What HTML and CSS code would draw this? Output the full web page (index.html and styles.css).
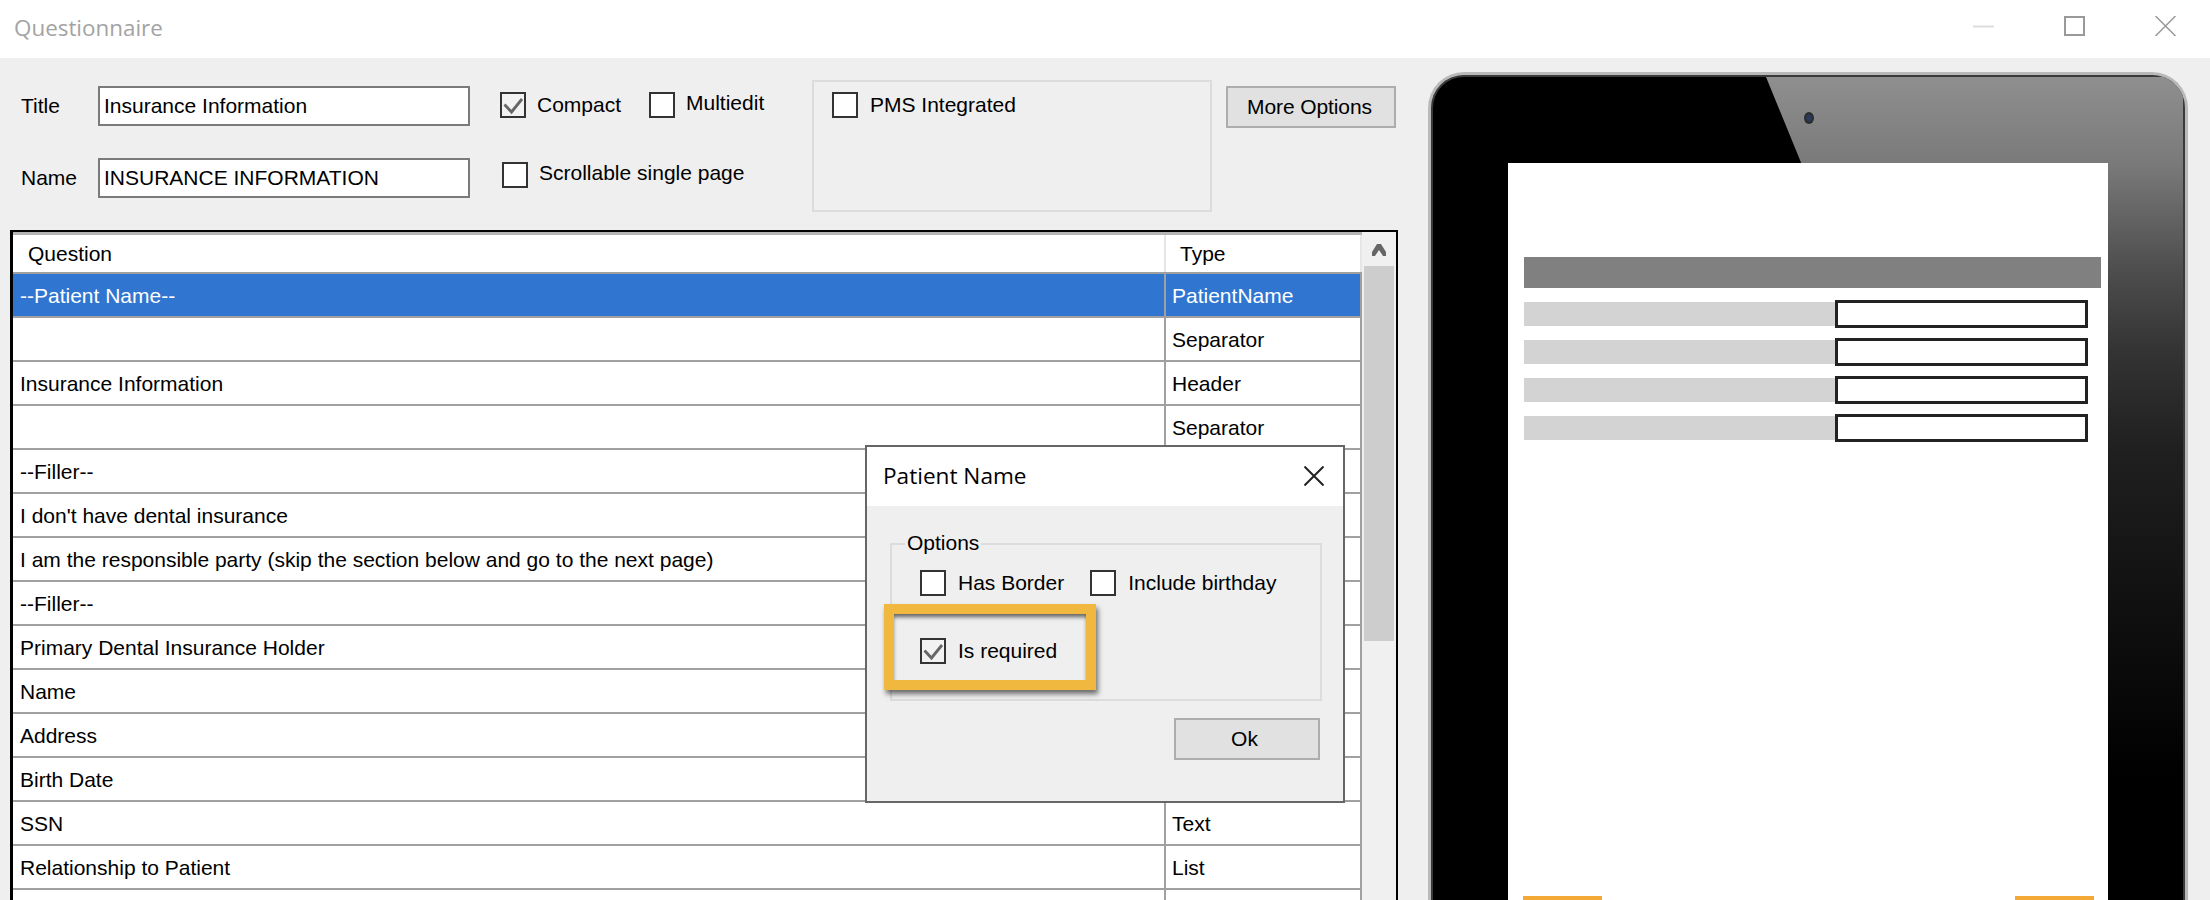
FILE: index.html
```html
<!DOCTYPE html>
<html lang="en">
<head>
<meta charset="utf-8">
<title>Questionnaire</title>
<link rel="stylesheet" href="styles.css">
</head>
<body>
<div class="window">
  <header class="titlebar">
    <span class="app-title">Questionnaire</span>
    <div class="win-buttons">
      <svg class="win-icon" viewBox="0 0 21 20"><path d="M0 10.5H21" stroke="#ddd" stroke-width="2"/></svg>
      <svg class="win-icon" viewBox="0 0 21 20"><rect x="1" y="1" width="19" height="18" fill="none" stroke="#999" stroke-width="2"/></svg>
      <svg class="win-icon" viewBox="0 0 21 20"><path d="M0.5 0L20.5 20M20.5 0L0.5 20" stroke="#999" stroke-width="1.5" fill="none"/></svg>
    </div>
  </header>
  <div class="content">
    <main class="editor">
      <section class="form">
        <div class="fields">
          <label class="label">Title</label><div class="input">Insurance Information</div>
          <label class="label">Name</label><div class="input">INSURANCE INFORMATION</div>
        </div>
        <div class="checks">
          <div class="check-row">
            <span class="box checked"><svg viewBox="0 0 22 22"><path d="M2.5 10.5L9.5 18L20 5" fill="none" stroke="#666" stroke-width="2.8"/></svg></span>
            <span class="check-label">Compact</span>
            <span class="box box-multi"></span>
            <span class="check-label raised">Multiedit</span>
          </div>
          <div class="check-row row-scroll">
            <span class="box"></span>
            <span class="check-label raised">Scrollable single page</span>
          </div>
        </div>
        <div class="pms">
          <div class="check-row">
            <span class="box"></span>
            <span class="check-label">PMS Integrated</span>
          </div>
        </div>
        <button class="btn btn-more">More Options</button>
      </section>
      <section class="table">
        <div class="rows">
          <div class="row head"><div class="cell">Question</div><div class="cell type">Type</div></div>
          <div class="row selected"><div class="cell">--Patient Name--</div><div class="cell type">PatientName</div></div>
          <div class="row"><div class="cell"></div><div class="cell type">Separator</div></div>
          <div class="row"><div class="cell">Insurance Information</div><div class="cell type">Header</div></div>
          <div class="row"><div class="cell"></div><div class="cell type">Separator</div></div>
          <div class="row"><div class="cell">--Filler--</div><div class="cell type"></div></div>
          <div class="row"><div class="cell">I don't have dental insurance</div><div class="cell type"></div></div>
          <div class="row"><div class="cell">I am the responsible party (skip the section below and go to the next page)</div><div class="cell type"></div></div>
          <div class="row"><div class="cell">--Filler--</div><div class="cell type"></div></div>
          <div class="row"><div class="cell">Primary Dental Insurance Holder</div><div class="cell type"></div></div>
          <div class="row"><div class="cell">Name</div><div class="cell type"></div></div>
          <div class="row"><div class="cell">Address</div><div class="cell type"></div></div>
          <div class="row"><div class="cell">Birth Date</div><div class="cell type"></div></div>
          <div class="row"><div class="cell">SSN</div><div class="cell type">Text</div></div>
          <div class="row"><div class="cell">Relationship to Patient</div><div class="cell type">List</div></div>
          <div class="row"><div class="cell"></div><div class="cell type"></div></div>
        </div>
        <div class="scrollbar">
          <div class="arrow"><svg viewBox="0 0 14 12"><path d="M0 12V8L5 0H9L14 8V12H11L7 6L3 12Z" fill="#666"/></svg></div>
          <div class="thumb"></div>
        </div>
      </section>
    </main>
    <aside class="tablet">
      <div class="glare"></div>
      <div class="camera"></div>
      <div class="screen">
        <div class="screen-head"></div>
        <div class="screen-rows">
          <div class="screen-row"><div class="screen-label"></div><div class="screen-input"></div></div>
          <div class="screen-row"><div class="screen-label"></div><div class="screen-input"></div></div>
          <div class="screen-row"><div class="screen-label"></div><div class="screen-input"></div></div>
          <div class="screen-row"><div class="screen-label"></div><div class="screen-input"></div></div>
        </div>
        <div class="screen-foot"><div class="screen-btn"></div><div class="screen-btn"></div></div>
      </div>
    </aside>
  </div>

  <div class="modal">
    <div class="modal-title">
      <span class="modal-name">Patient Name</span>
      <svg class="modal-close" viewBox="0 0 20 20"><path d="M0.5 0.5L19.5 19.5M19.5 0.5L0.5 19.5" stroke="#222" stroke-width="2" fill="none"/></svg>
    </div>
    <div class="modal-body">
      <div class="group">
        <div class="legend">Options</div>
        <div class="check-row group-row">
          <span class="box"></span>
          <span class="check-label">Has Border</span>
          <span class="box box-birthday"></span>
          <span class="check-label">Include birthday</span>
        </div>
        <div class="check-row group-row row-required">
          <span class="box checked"><svg viewBox="0 0 22 22"><path d="M2.5 10.5L9.5 18L20 5" fill="none" stroke="#666" stroke-width="2.8"/></svg></span>
          <span class="check-label">Is required</span>
        </div>
      </div>
      <div class="modal-foot"><button class="btn btn-ok">Ok</button></div>
    </div>
    <div class="highlight"></div>
  </div>
</div>
</body>
</html>
```
FILE: styles.css
```css
* { box-sizing: border-box; }
html, body { margin: 0; padding: 0; }
body {
  width: 2210px;
  height: 900px;
  overflow: hidden;
  font-family: "Liberation Sans", Arial, sans-serif;
  font-size: 21px;
  color: #000;
}
.window {
  position: relative;
  width: 2210px;
  height: 900px;
  overflow: hidden;
  background: #efefef;
  display: flex;
  flex-direction: column;
}

/* Title bar */
.titlebar {
  height: 58px;
  flex: none;
  background: #fff;
  display: flex;
  align-items: center;
  justify-content: space-between;
  padding: 0 34px 4px 14px;
}
.app-title {
  font-family: "Open Sans", sans-serif;
  font-size: 22.4px;
  color: #a3a3a3;
}
.win-buttons { display: flex; gap: 70px; padding-bottom: 2px; }
.win-icon { width: 21px; height: 20px; display: block; }

.content { flex: 1; display: flex; min-height: 0; }
.editor { width: 1398px; flex: none; display: flex; flex-direction: column; }

/* Top form */
.form { height: 172px; flex: none; display: flex; align-items: flex-start; padding-left: 21px; }
.fields {
  display: grid;
  grid-template-columns: 77px 372px;
  row-gap: 32px;
  align-items: center;
  margin-top: 28px;
}
.label { display: block; }
.input {
  height: 40px;
  border: 2px solid #7a7a7a;
  background: #fff;
  padding-left: 4px;
  line-height: 36px;
}
.checks { width: 312px; margin: 34px 0 0 30px; }
.check-row { display: flex; align-items: center; height: 26px; }
.row-scroll { margin-top: 44px; padding-left: 2px; }
.box {
  width: 26px;
  height: 26px;
  flex: none;
  border: 2px solid #333;
  background: #fff;
}
.box svg { display: block; width: 22px; height: 22px; }
.box.checked { background: #f2f2f2; }
.check-label { margin-left: 12px; white-space: nowrap; }
.checks .check-label { margin-left: 11px; }
.raised { padding-bottom: 4px; }
.box-multi { margin-left: 28px; }
.pms {
  width: 400px;
  height: 132px;
  margin-top: 22px;
  border: 2px solid #dcdcdc;
  padding: 10px 0 0 18px;
}
.btn {
  font: inherit;
  color: #000;
  background: #e1e1e1;
  border: 2px solid #adadad;
  padding: 0;
  display: block;
}
.btn-more { width: 170px; height: 42px; margin: 28px 0 0 14px; padding-right: 3px; letter-spacing: -0.1px; }

/* Question table */
.table {
  flex: 1;
  margin-left: 10px;
  display: flex;
  border-top: 2px solid #000;
  border-left: 3px solid #000;
  border-right: 2px solid #000;
  background: #fff;
  min-height: 0;
}
.rows { width: 1349px; flex: none; }
.row {
  display: grid;
  grid-template-columns: 1151px 198px;
  height: 44px;
  border-bottom: 2px solid #a0a0a0;
  background: #fff;
}
.cell { padding-left: 7px; line-height: 44px; white-space: nowrap; }
.cell.type { padding-left: 6px; border-left: 2px solid #a0a0a0; border-right: 2px solid #a0a0a0; }
.row.head { height: 42px; border-top: 3px solid #b4b4b4; }
.row.head .cell { padding-left: 15px; line-height: 37px; }
.row.head .cell.type { padding-left: 14px; border-left-color: #e6e6e6; border-right-color: #e6e6e6; }
.row.selected { background: #3076d0; }
.row.selected .cell { color: #fff; }
.scrollbar { flex: 1; background: #f0f0f0; padding: 0 2px; }
.arrow { height: 34px; display: flex; justify-content: center; padding-top: 12px; }
.arrow svg { width: 14px; height: 12px; display: block; }
.thumb { height: 375px; background: #cdcdcd; }

/* Tablet */
.tablet {
  position: relative;
  width: 760px;
  height: 860px;
  margin: 14px 0 0 30px;
  flex: none;
  overflow: hidden;
  background: #000;
  border: 3px solid #b9b9b9;
  border-bottom: 0;
  border-radius: 36px 36px 0 0;
  padding: 88px 0 0 77px;
  box-shadow: inset 0 0 0 2px #3a3a3a;
}
.glare {
  position: absolute;
  inset: 2px 2px 0 0;
  background: linear-gradient(#8f8f8f 0, #7a7a7a 86px, #505050 186px, #333 276px, #1f1f1f 376px, #000 700px);
  clip-path: polygon(335px 0, 100% 0, 100% 100%, 555px 100%, 371px 88px);
}
.camera {
  position: absolute;
  left: 373px;
  top: 37px;
  width: 10px;
  height: 12px;
  border-radius: 50%;
  background: radial-gradient(#2a3a5e 25%, #2a2a2a 60%);
}
.screen {
  position: relative;
  width: 600px;
  height: 760px;
  background: #fff;
  display: flex;
  flex-direction: column;
}
.screen-head { width: 577px; height: 31px; margin: 94px 0 0 16px; background: #808080; flex: none; }
.screen-rows { display: flex; flex-direction: column; gap: 10px; margin: 12px 0 0 16px; }
.screen-row { display: flex; align-items: center; height: 28px; }
.screen-label { width: 311px; height: 24px; background: #d3d3d3; }
.screen-input { width: 253px; height: 28px; border: 3px solid #222; background: #fff; }
.screen-foot { margin-top: auto; display: flex; justify-content: space-between; padding: 0 14px 0 15px; }
.screen-btn { width: 79px; height: 27px; background: #f4a835; }

/* Modal */
.modal {
  position: absolute;
  left: 865px;
  top: 445px;
  width: 480px;
  height: 358px;
  border: 2px solid #666;
  background: #efefef;
}
.modal-title {
  height: 59px;
  background: #fff;
  display: flex;
  align-items: center;
  justify-content: space-between;
  padding: 0 19px 0 16px;
}
.modal-name { font-family: "Open Sans", sans-serif; font-size: 22.6px; margin-top: -2px; }
.modal-close { width: 20px; height: 20px; display: block; margin-top: -2px; }
.modal-body { padding: 37px 23px 0; }
.group { width: 432px; height: 158px; border: 2px solid #dcdcdc; }
.legend {
  width: fit-content;
  margin: -14px 0 0 13px;
  padding: 0 2px;
  line-height: 24px;
  background: #efefef;
}
.group-row { margin-top: 15px; padding-left: 28px; }
.box-birthday { margin-left: 26px; }
.row-required { margin-top: 42px; }
.modal-foot { display: flex; justify-content: flex-end; margin-top: 17px; }
.btn-ok { width: 146px; height: 42px; flex: none; padding-right: 5px; }
.highlight {
  position: absolute;
  left: 17px;
  top: 157px;
  width: 212px;
  height: 86px;
  border: 10px solid #f0b83f;
  box-shadow: 2px 4px 5px rgba(0,0,0,.55), inset 0 4px 4px -1px rgba(0,0,0,.6);
}
```
